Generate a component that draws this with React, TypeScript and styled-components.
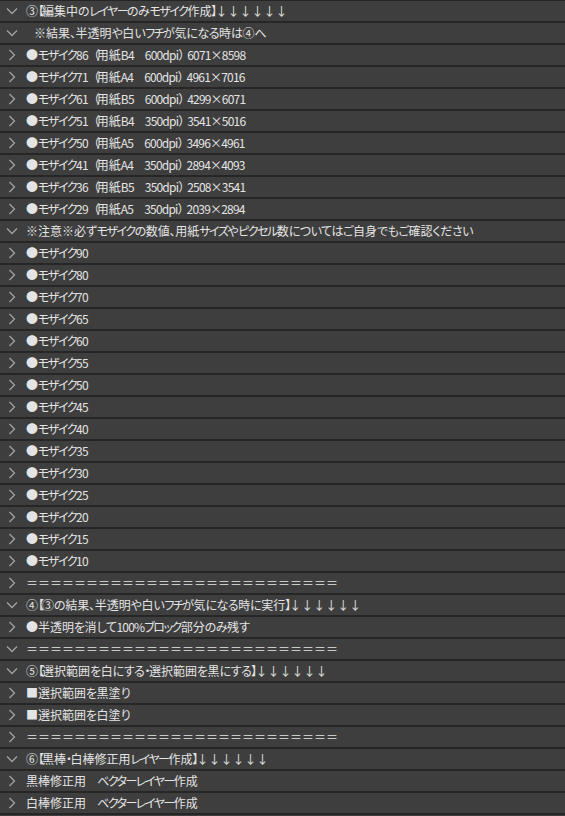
import styled, { createGlobalStyle } from 'styled-components';

const GlobalStyle = createGlobalStyle`
  html, body {
    margin: 0;
    padding: 0;
    background: #3e3e3e;
  }
`;

type Item = {
  label: string;
  open?: boolean;
  indent?: boolean;
};

const arrows = '↓↓↓↓↓↓';
const rule = '＝'.repeat(26);

const sizes: [string, string, string, string][] = [
  ['86', 'B4', '600', '6071×8598'],
  ['71', 'A4', '600', '4961×7016'],
  ['61', 'B5', '600', '4299×6071'],
  ['51', 'B4', '350', '3541×5016'],
  ['50', 'A5', '600', '3496×4961'],
  ['41', 'A4', '350', '2894×4093'],
  ['36', 'B5', '350', '2508×3541'],
  ['29', 'A5', '350', '2039×2894'],
];

const levels = ['90', '80', '70', '65', '60', '55', '50', '45', '40', '35', '30', '25', '20', '15', '10'];

const items: Item[] = [
  { label: `③【編集中のレイヤーのみモザイク作成】${arrows}`, open: true },
  { label: '※結果、半透明や白いフチが気になる時は④へ', open: true, indent: true },
  ...sizes.map(([n, paper, dpi, px]) => ({
    label: `●モザイク${n}（用紙${paper}　${dpi}dpi）${px}`,
  })),
  {
    label: '※注意※必ずモザイクの数値、用紙サイズやピクセル数についてはご自身でもご確認ください',
    open: true,
  },
  ...levels.map((n) => ({ label: `●モザイク${n}` })),
  { label: rule },
  { label: `④【③の結果、半透明や白いフチが気になる時に実行】${arrows}`, open: true },
  { label: '●半透明を消して100%ブロック部分のみ残す' },
  { label: rule, open: true },
  { label: `⑤【選択範囲を白にする・選択範囲を黒にする】${arrows}`, open: true },
  { label: '■選択範囲を黒塗り' },
  { label: '■選択範囲を白塗り' },
  { label: rule },
  { label: `⑥【黒棒・白棒修正用レイヤー作成】${arrows}`, open: true },
  { label: '黒棒修正用　ベクターレイヤー作成' },
  { label: '白棒修正用　ベクターレイヤー作成' },
];

// split a label into runs so katakana, hiragana, latin and brackets can be set tighter
const runPattern = /([\u30A0-\u30FF]+)|([\u3041-\u309F、]+)|([\x21-\x7E×]+)|([【】])|([（）])|(　)|(↓+)/g;

const renderLabel = (text: string) => {
  const parts: React.ReactNode[] = [];
  let last = 0;
  let m: RegExpExecArray | null;
  let k = 0;
  runPattern.lastIndex = 0;
  while ((m = runPattern.exec(text))) {
    if (m.index > last) parts.push(text.slice(last, m.index));
    if (m[1]) parts.push(<Kana key={k++}>{m[1]}</Kana>);
    else if (m[2]) parts.push(<Hira key={k++}>{m[2]}</Hira>);
    else if (m[3]) parts.push(<Latin key={k++}>{m[3]}</Latin>);
    else if (m[4]) parts.push(<Lenticular key={k++}>{m[4]}</Lenticular>);
    else if (m[5]) parts.push(<Paren key={k++}>{m[5]}</Paren>);
    else if (m[6]) parts.push(<Gap key={k++} />);
    else if (m[7]) parts.push(<Arrows key={k++}>{m[7].split('').map((a) => a + '\uFE0E').join('')}</Arrows>);
    last = m.index + m[0].length;
  }
  if (last < text.length) parts.push(text.slice(last));
  return parts;
};

const Chevron = ({ open }: { open?: boolean }) => (
  <ChevronBox>
    {open ? (
      <svg width="12" height="8" viewBox="0 0 12 8">
        <path d="M1 1.5 L6 6.5 L11 1.5" fill="none" stroke="#a2a2a2" strokeWidth="1.3" />
      </svg>
    ) : (
      <svg width="8" height="12" viewBox="0 0 8 12">
        <path d="M1.5 1 L6.5 6 L1.5 11" fill="none" stroke="#a2a2a2" strokeWidth="1.3" />
      </svg>
    )}
  </ChevronBox>
);

const App = () => {
  return (
    <>
      <GlobalStyle />
      <Panel>
        {items.map((item, i) => (
          <Row key={i}>
            <Chevron open={item.open} />
            <Label $indent={item.indent}>{renderLabel(item.label)}</Label>
          </Row>
        ))}
      </Panel>
    </>
  );
};

export default App;

const Panel = styled.div`
  width: 565px;
  height: 816px;
  background: #3e3e3e;
  border-top: 1px solid #262626;
  box-sizing: border-box;
  overflow: hidden;
  font-family: 'Noto Sans CJK JP', 'Noto Sans', sans-serif;
  font-size: 12px;
  font-feature-settings: 'palt';
  color: #e4e4e4;
`;

const Row = styled.div`
  display: flex;
  align-items: center;
  height: 20px;
  border-bottom: 2px solid #262626;
  background: #3e3e3e;
`;

const ChevronBox = styled.div`
  width: 24px;
  flex: 0 0 24px;
  display: flex;
  align-items: center;
  justify-content: center;
  padding-right: 1px;
`;

const Label = styled.span<{ $indent?: boolean }>`
  padding-left: ${(p) => (p.$indent ? '9px' : '1px')};
  white-space: nowrap;
  line-height: 20px;
`;

const Kana = styled.span`
  letter-spacing: -1.5px;
`;

const Hira = styled.span`
  letter-spacing: -0.5px;
`;

const Latin = styled.span`
  letter-spacing: -0.8px;
`;

const Lenticular = styled.span`
  letter-spacing: -2px;
`;

const Paren = styled.span`
  font-feature-settings: normal;
  letter-spacing: -3px;
`;

const Gap = styled.span`
  display: inline-block;
  width: 11px;
`;

const Arrows = styled.span`
  font-family: 'Noto Sans CJK JP', sans-serif;
  font-variant-emoji: text;
  color: #e4e4e4;
`;
